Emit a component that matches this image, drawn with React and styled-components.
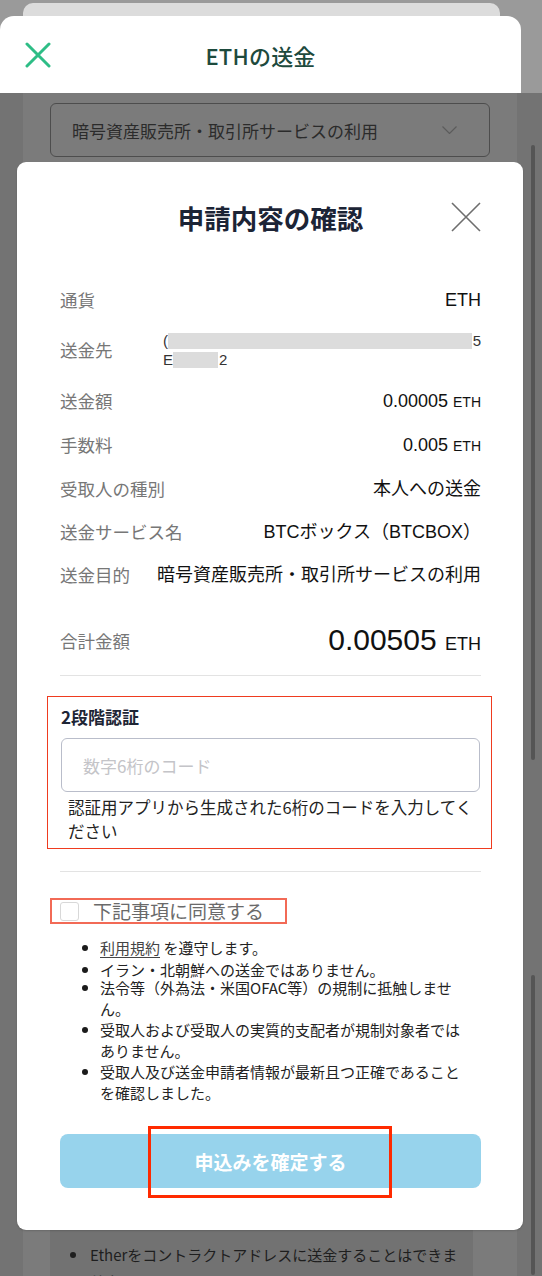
import styled, { createGlobalStyle } from 'styled-components'

const GlobalStyle = createGlobalStyle`
  html, body {
    margin: 0;
    padding: 0;
    background: #737373;
  }
  * {
    box-sizing: border-box;
  }
  body {
    font-family: "Liberation Sans", "Noto Sans CJK JP", sans-serif;
  }
`

const Page = styled.div`
  width: 542px;
  height: 1276px;
  overflow: hidden;
  display: flex;
  flex-direction: column;
  background: #9a9a9a;
`

const TopStrip = styled.div`
  height: 16px;
  flex-shrink: 0;
  padding: 3px 42px 0 23px;
  display: flex;
`

const BackCard = styled.div`
  flex: 1;
  background: #dcdcdc;
  border-radius: 10px 10px 0 0;
`

const Header = styled.div`
  height: 77px;
  flex-shrink: 0;
  margin-right: 21px;
  background: #fff;
  border-radius: 14px 14px 0 0;
  display: grid;
  grid-template-columns: 1fr auto 1fr;
  align-items: center;
  padding: 0 25px;
`

const HeaderTitle = styled.h1`
  margin: 0;
  font-family: "Noto Sans CJK JP", sans-serif;
  font-size: 22px;
  font-weight: 500;
  color: #1d4a3d;
  letter-spacing: 0.2px;
`

const Body = styled.div`
  position: relative;
  flex: 1;
  display: flex;
  overflow: hidden;
`

const Gutter = styled.div`
  width: 23px;
  background: #737373;
`

const Main = styled.div`
  flex: 1;
  background: #7b7b7b;
  display: flex;
  flex-direction: column;
`

const Rail = styled.div`
  width: 25px;
  background: #737373;
  padding: 52px 0 0 14px;
  display: flex;
  flex-direction: column;
`

const Thumb = styled.div`
  width: 4px;
  flex-shrink: 0;
  height: ${p => p.$h}px;
  margin-top: ${p => p.$gap || 0}px;
  background: #555;
  border-radius: 2px;
`

const Select = styled.div`
  flex-shrink: 0;
  margin: 10px 27px 0;
  height: 54px;
  border: 1px solid #4d4d4d;
  border-radius: 6px;
  display: flex;
  align-items: center;
  justify-content: space-between;
  padding: 0 32px 0 21px;
  font-family: "Noto Sans CJK JP", sans-serif;
  font-size: 17px;
  color: #2b2b2b;
`

const NoticePanel = styled.div`
  flex-shrink: 0;
  margin: 1043px 44px 0 27px;
  height: 120px;
  background: #727272;
  padding: 42px 8px 0 40px;
`

const NoticeItem = styled.p`
  position: relative;
  margin: 0;
  font-family: "Noto Sans CJK JP", sans-serif;
  font-size: 15px;
  line-height: 26px;
  color: #1e1e1e;

  &::before {
    content: "";
    position: absolute;
    left: -20px;
    top: 10px;
    width: 6px;
    height: 6px;
    border-radius: 50%;
    background: #1e1e1e;
  }
`

const Modal = styled.div`
  position: absolute;
  top: 69px;
  left: 17px;
  width: 506px;
  background: #fff;
  border-radius: 9px;
  padding: 30px 42px 42px 43px;
  box-shadow: 0 1px 2px rgba(0, 0, 0, 0.15);
`

const TitleRow = styled.div`
  height: 50px;
  display: grid;
  grid-template-columns: 1fr auto 1fr;
  align-items: center;
`

const ModalTitle = styled.h2`
  margin: 0;
  grid-column: 2;
  font-family: "Noto Sans CJK JP", sans-serif;
  font-size: 26.5px;
  font-weight: 700;
  color: #1c2436;
`

const CloseButton = styled.button`
  justify-self: end;
  width: 30px;
  height: 30px;
  padding: 0;
  border: none;
  background: none;
  display: flex;
`

const Details = styled.div`
  margin-top: 36px;
`

const Row = styled.div`
  display: flex;
  justify-content: space-between;
  align-items: center;
  padding: ${p => (p.$tall ? '10px 0' : '9.5px 0')};
  line-height: 24px;
`

const Label = styled.span`
  font-family: "Noto Sans CJK JP", sans-serif;
  font-size: 17.5px;
  color: #777;
  white-space: nowrap;
`

const Value = styled.span`
  font-size: 18px;
  color: #111;
  white-space: nowrap;
`

const Unit = styled.span`
  font-size: ${p => p.$size || 14}px;
`

const Address = styled.div`
  width: 318px;
  display: flex;
  flex-direction: column;
  font-size: 15px;
  line-height: 19px;
  color: #333;
`

const AddressLine = styled.div`
  display: flex;
  align-items: center;
`

const Mask = styled.span`
  display: inline-block;
  width: ${p => p.$w}px;
  height: 16px;
  background: #dcdcdc;
  margin: 0 1px 0 0;
`

const TotalRow = styled.div`
  margin-top: 18px;
  height: 52px;
  display: flex;
  justify-content: space-between;
  align-items: center;
`

const TotalValue = styled.span`
  font-size: 30px;
  color: #111;
`

const Divider = styled.hr`
  margin: ${p => p.$top}px 0 0;
  border: none;
  height: 1px;
  background: #e3e3e3;
`

const TwoFactorBox = styled.div`
  margin: 20px -11px 0 -13px;
  padding: 8px 11px 5px 13px;
  border: 1px solid #ef3b1f;
`

const FieldLabel = styled.div`
  font-family: "Noto Sans CJK JP", sans-serif;
  font-size: 17px;
  font-weight: 700;
  line-height: 24px;
  color: #1e2535;
`

const CodeInput = styled.input`
  display: block;
  width: 100%;
  height: 54px;
  margin-top: 9px;
  padding: 0 21px;
  border: 1px solid #b9bdca;
  border-radius: 6px;
  font-family: "Noto Sans CJK JP", sans-serif;
  font-size: 17px;
  outline: none;

  &::placeholder {
    color: #c4c4c8;
  }
`

const HelpText = styled.p`
  margin: 3px 0 0;
  padding-left: 7px;
  font-family: "Noto Sans CJK JP", sans-serif;
  font-size: 16.5px;
  line-height: 24px;
  color: #222;
`

const AgreeRow = styled.label`
  margin: 26px 0 0 -10px;
  width: fit-content;
  height: 26px;
  display: flex;
  align-items: center;
  padding: 0 21px 0 8px;
  border: 2px solid #f26a56;
`

const CheckBox = styled.span`
  width: 19px;
  height: 19px;
  border: 1px solid #d8d8d8;
  border-radius: 3px;
  background: #fff;
`

const AgreeText = styled.span`
  margin-left: 14px;
  font-family: "Noto Sans CJK JP", sans-serif;
  font-size: 19px;
  line-height: 22px;
  color: #6a6a6a;
`

const Terms = styled.ul`
  margin: 13px 0 0;
  padding: 0 16px 0 40px;
  list-style: none;
  font-family: "Noto Sans CJK JP", sans-serif;
  font-size: 15px;
  line-height: 21px;
  color: #222;
`

const Term = styled.li`
  position: relative;
  margin-top: ${p => p.$shift || 0}px;

  &::before {
    content: "";
    position: absolute;
    left: -18px;
    top: 8px;
    width: 6px;
    height: 6px;
    border-radius: 50%;
    background: #1b1b1b;
  }
`

const TermLink = styled.span`
  text-decoration: underline;
  text-underline-offset: 3px;
  color: #444;
`

const SubmitWrap = styled.div`
  position: relative;
  margin-top: 31px;
`

const SubmitButton = styled.button`
  width: 100%;
  height: 54px;
  border: none;
  border-radius: 8px;
  background: #97d3ec;
  color: #fff;
  font-family: "Noto Sans CJK JP", sans-serif;
  font-size: 19px;
  font-weight: 700;
`

const Highlight = styled.div`
  position: absolute;
  left: 88px;
  top: -8px;
  width: 244px;
  height: 72px;
  border: 3px solid #ff2a00;
  pointer-events: none;
`

const GreenX = () => (
  <svg width="26" height="26" viewBox="0 0 26 26">
    <path d="M2 2 L24 24 M24 2 L2 24" stroke="#2ebd86" strokeWidth="3" strokeLinecap="round" />
  </svg>
)

const ThinX = () => (
  <svg width="30" height="30" viewBox="0 0 30 30">
    <path d="M1 1 L29 29 M29 1 L1 29" stroke="#6e6e6e" strokeWidth="1.6" />
  </svg>
)

const Chevron = () => (
  <svg width="15" height="8" viewBox="0 0 15 8">
    <path d="M0.5 0.5 L7.5 7.5 L14.5 0.5" stroke="#5c5c5c" strokeWidth="1.2" fill="none" />
  </svg>
)

const rows = [
  { label: '受取人の種別', value: '本人への送金' },
  { label: '送金サービス名', value: 'BTCボックス（BTCBOX）' },
  { label: '送金目的', value: '暗号資産販売所・取引所サービスの利用' },
]

const terms = [
  'イラン・北朝鮮への送金ではありません。',
  '法令等（外為法・米国OFAC等）の規制に抵触しません。',
  '受取人および受取人の実質的支配者が規制対象者ではありません。',
  '受取人及び送金申請者情報が最新且つ正確であることを確認しました。',
]

const App = () => {
  return (
    <>
      <GlobalStyle />
      <Page>
        <TopStrip>
          <BackCard />
        </TopStrip>
        <Header>
          <GreenX />
          <HeaderTitle>ETHの送金</HeaderTitle>
        </Header>
        <Body>
          <Gutter />
          <Main>
            <Select>
              暗号資産販売所・取引所サービスの利用
              <Chevron />
            </Select>
            <NoticePanel>
              <NoticeItem>Etherをコントラクトアドレスに送金することはできません。</NoticeItem>
            </NoticePanel>
          </Main>
          <Rail>
            <Thumb $h={615} />
            <Thumb $h={300} $gap={215} />
          </Rail>

          <Modal>
            <TitleRow>
              <ModalTitle>申請内容の確認</ModalTitle>
              <CloseButton aria-label="閉じる">
                <ThinX />
              </CloseButton>
            </TitleRow>

            <Details>
              <Row>
                <Label>通貨</Label>
                <Value>ETH</Value>
              </Row>
              <Row $tall>
                <Label>送金先</Label>
                <Address>
                  <AddressLine>(<Mask $w={306} />5</AddressLine>
                  <AddressLine>E<Mask $w={45} />2</AddressLine>
                </Address>
              </Row>
              <Row>
                <Label>送金額</Label>
                <Value>0.00005 <Unit>ETH</Unit></Value>
              </Row>
              <Row>
                <Label>手数料</Label>
                <Value>0.005 <Unit>ETH</Unit></Value>
              </Row>
              {rows.map(r => (
                <Row key={r.label}>
                  <Label>{r.label}</Label>
                  <Value>{r.value}</Value>
                </Row>
              ))}
            </Details>

            <TotalRow>
              <Label>合計金額</Label>
              <TotalValue>0.00505 <Unit $size={18}>ETH</Unit></TotalValue>
            </TotalRow>
            <Divider $top={9} />

            <TwoFactorBox>
              <FieldLabel>2段階認証</FieldLabel>
              <CodeInput placeholder="数字6桁のコード" />
              <HelpText>認証用アプリから生成された6桁のコードを入力してください</HelpText>
            </TwoFactorBox>
            <Divider $top={22} />

            <AgreeRow>
              <CheckBox />
              <AgreeText>下記事項に同意する</AgreeText>
            </AgreeRow>

            <Terms>
              <Term>
                <TermLink>利用規約</TermLink> を遵守します。
              </Term>
              {terms.map((t, i) => (
                <Term key={t} $shift={i === 0 ? 1 : i === 1 ? -3 : 0}>{t}</Term>
              ))}
            </Terms>

            <SubmitWrap>
              <SubmitButton>申込みを確定する</SubmitButton>
              <Highlight />
            </SubmitWrap>
          </Modal>
        </Body>
      </Page>
    </>
  )
}

export default App
